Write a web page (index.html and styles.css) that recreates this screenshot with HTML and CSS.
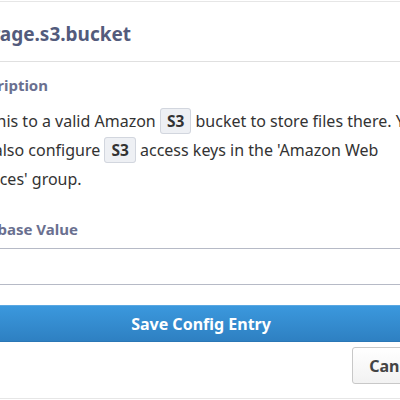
FILE: index.html
```html
<!DOCTYPE html>
<html>
<head>
<meta charset="utf-8">
<link rel="stylesheet" href="styles.css">
</head>
<body>
<div class="modal">
  <div class="header">
    <h1 class="title">storage.s3.bucket</h1>
  </div>
  <div class="content">
    <div class="label">Description</div>
    <p class="desc">Set this to a valid Amazon <code class="code">S3</code> bucket to store files there. You can also configure <code class="code">S3</code> access keys in the 'Amazon Web Services' group.</p>
    <div class="label label-db">Database Value</div>
    <textarea class="input"></textarea>
    <button class="btn-primary">Save Config Entry</button>
    <div class="actions">
      <button class="btn-cancel">Cancel</button>
    </div>
  </div>
  <div class="footer"></div>
</div>
</body>
</html>
```

FILE: styles.css
```css
html, body {
  margin: 0;
  padding: 0;
  background: #fff;
  overflow: hidden;
  width: 400px;
  height: 400px;
}
.modal {
  width: 476px;
  margin-left: -37px;
  font-family: "Noto Sans", sans-serif;
  color: #333;
  border-top: 1px solid #e6e6e6;
  margin-top: 1px;
}
.header {
  height: 59px;
  border-bottom: 1px solid #e0e0e0;
  display: flex;
  align-items: center;
}
.title {
  margin: 0 0 0 -1px;
  font-size: 19px;
  font-weight: 700;
  color: #535b7c;
  line-height: 26px;
  padding-top: 5px;
}
.content {
  padding-top: 13px;
}
.label {
  font-size: 15px;
  font-weight: 700;
  color: #6a7090;
  line-height: 20px;
  margin-left: -1px;
}
.desc {
  margin: 12px 0 0 0;
  font-size: 16px;
  line-height: 29px;
  color: #333;
}
.code {
  font-family: "Noto Sans", sans-serif;
  font-weight: 700;
  font-size: 15.5px;
  color: #333;
  background: #eef0f4;
  border: 1px solid #d2d6de;
  border-radius: 3px;
  padding: 1px 6px;
}
.label-db {
  margin-top: 25px;
}
.input {
  display: block;
  box-sizing: border-box;
  width: 100%;
  height: 37px;
  margin: 9px 0 0 0;
  border: 1px solid #b6bac6;
  border-radius: 3px;
  resize: none;
  background: #fff;
}
.btn-primary {
  display: block;
  box-sizing: border-box;
  width: 100%;
  height: 37px;
  margin-top: 20px;
  border: 1px solid #2a77b6;
  border-top-color: #5aa8e2;
  border-radius: 3px;
  background: linear-gradient(#3b98dd, #2e80c2);
  color: #fff;
  font-family: "Noto Sans", sans-serif;
  font-weight: 700;
  font-size: 16px;
  padding: 0;
}
.actions {
  display: flex;
  justify-content: flex-end;
  margin-top: 5px;
}
.btn-cancel {
  box-sizing: border-box;
  height: 37px;
  padding: 0 16px;
  border: 1px solid #c8c8c8;
  border-radius: 3px;
  background: linear-gradient(#fff, #f2f2f2);
  color: #444;
  font-family: "Noto Sans", sans-serif;
  font-weight: 700;
  font-size: 16px;
}
.footer {
  margin-top: 14px;
  border-top: 1px solid #e6e6e6;
}
```
